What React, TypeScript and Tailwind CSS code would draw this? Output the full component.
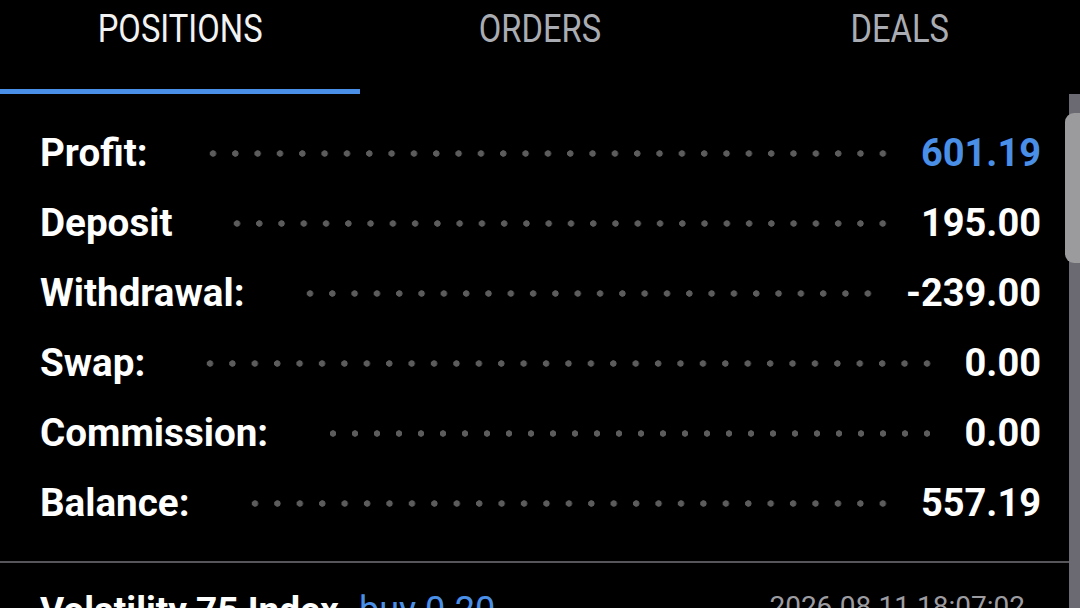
import React from 'react';

const rows = [
  { label: 'Profit:', value: '601.19', blue: true },
  { label: 'Deposit', value: '195.00' },
  { label: 'Withdrawal:', value: '-239.00' },
  { label: 'Swap:', value: '0.00' },
  { label: 'Commission:', value: '0.00' },
  { label: 'Balance:', value: '557.19' },
];

const tabs = ['POSITIONS', 'ORDERS', 'DEALS'];

const App = () => {
  return <div className="w-[1080px] h-[608px] bg-black overflow-hidden flex flex-col font-['Roboto',sans-serif]">
      {/* Tabs */}
      <div className="grid grid-cols-3 h-[94px] shrink-0">
        {tabs.map((t, i) => <div key={t} className={`flex justify-center pt-[10px] ${i === 0 ? 'border-b-[5px] border-[#4a8fe7]' : ''}`}>
            <span className={`text-[39px] leading-none scale-x-[0.84] ${i === 0 ? 'text-[#f2f2f2]' : 'text-[#a9adb3]'}`}>
              {t}
            </span>
          </div>)}
      </div>
      {/* Body */}
      <div className="flex flex-1 min-h-0 relative">
        <div className="flex-1 flex flex-col pt-[24px]">
          {rows.map(r => <div key={r.label} className="h-[70px] shrink-0 flex items-center pl-[40px] pr-[28px]">
              <span className="text-[38.6px] leading-none font-bold text-white">{r.label}</span>
              <div className="flex-1 h-[7px] ml-[54px] mr-[27px] bg-[radial-gradient(circle,#5c5c5c_2.9px,transparent_3.5px)] bg-[length:22px_7px] bg-repeat-space" />
              <span className={`text-[38px] leading-none font-bold ${r.blue ? 'text-[#4a8fe7]' : 'text-white'}`}>
                {r.value}
              </span>
            </div>)}
          <div className="shrink-0 mt-[23px] border-t-2 border-[#56565a]" />
          <div className="shrink-0 flex items-start pl-[40px] pr-[44px] pt-[29px]">
            <span className="text-[37px] leading-none font-bold text-white">Volatility 75 Index</span>
            <span className="text-[36px] leading-none text-[#4a8fe7] ml-[20px]">buy 0.20</span>
            <span className="ml-auto text-[28px] leading-none text-[#9c9ca0] mt-[1px]">2026.08.11 18:07:02</span>
          </div>
        </div>
        {/* Scrollbar */}
        <div className="w-[11px] bg-[#6b6972] shrink-0" />
        <div className="absolute right-0 top-[19px] w-[15px] h-[150px] bg-[#9b9b9d] rounded-l-[9px]" />
      </div>
    </div>;
};
export default App;
